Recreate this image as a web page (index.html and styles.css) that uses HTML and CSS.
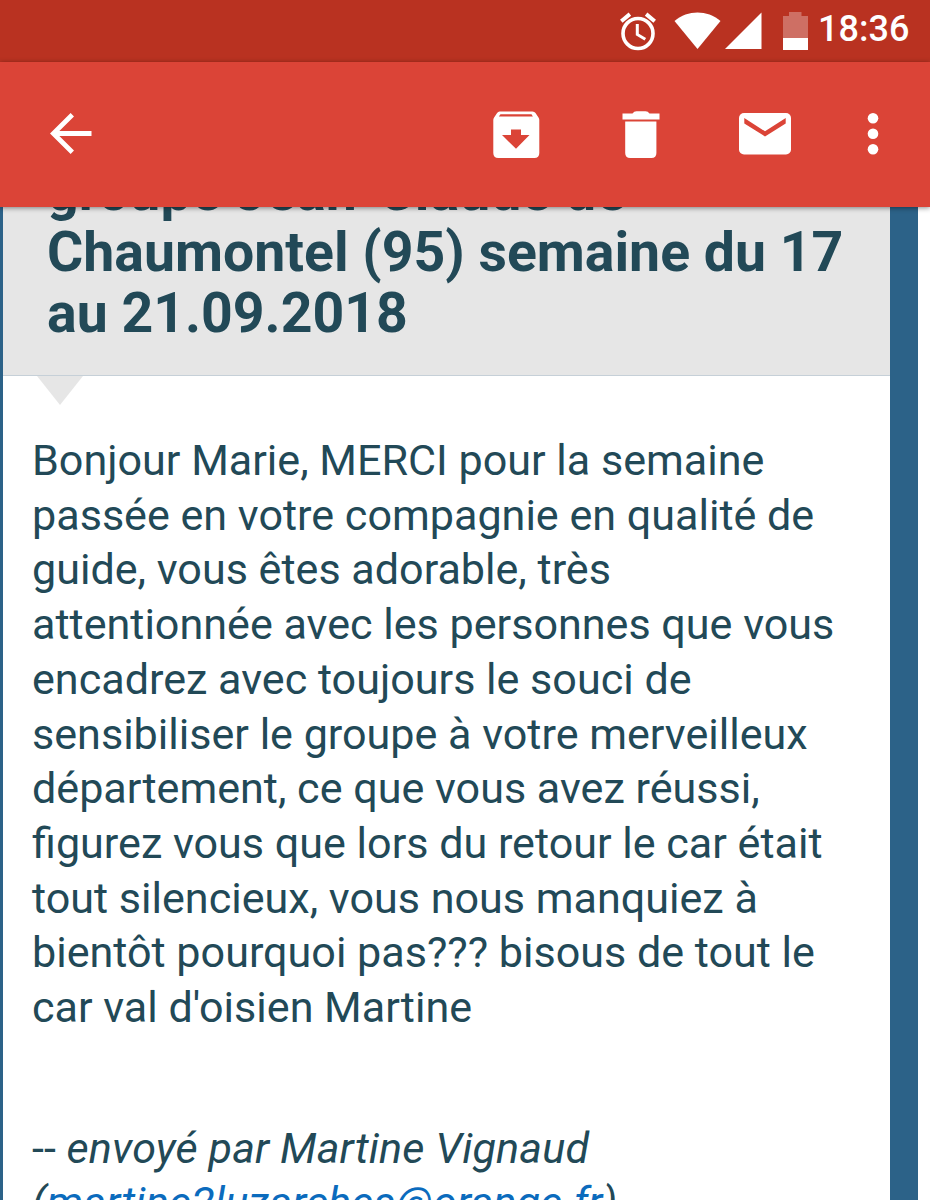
FILE: index.html
```
<!doctype html>
<html lang="fr">
<head>
    <meta charset="UTF-8">
    <meta name="viewport" content="width=device-width, initial-scale=1.0">
    <title>Message</title>
    <link rel="stylesheet" href="styles.css">
</head>
<body>
<div class="status-bar">
    <svg class="alarm" width="38" height="40" viewBox="0 0 38 40" fill="none" stroke="#fff">
        <circle cx="19" cy="21.5" r="15" stroke-width="3.6"/>
        <path d="M18.3 12v10.5l8 4.8" stroke-width="3"/>
        <path d="M2.3 9.2l8.6-7.1M35.7 9.2l-8.6-7.1" stroke-width="4"/>
    </svg>
    <svg class="wifi" width="47" height="38" viewBox="0 0 47 38" fill="#fff">
        <path d="M0.5 9C14-2.2 33-2.2 46.5 9L23.5 37z"/>
    </svg>
    <svg class="signal" width="37" height="38" viewBox="0 0 37 38" fill="#fff">
        <path d="M36.5 0.5V37H0z"/>
    </svg>
    <svg class="battery" width="25" height="38" viewBox="0 0 25 38" fill="#fff">
        <path d="M0 4h6V0h12.5v4H25v22H0z" opacity=".3"/>
        <path d="M0 26h25v12H0z"/>
    </svg>
    <span class="time">18:36</span>
</div>
<div class="toolbar">
    <svg class="back" width="42" height="42" viewBox="0 0 42 42" fill="none" stroke="#fff" stroke-width="4.8">
        <path d="M41.5 20.5H4M22.3 1.8L3.4 20.5L22.3 39.2"/>
    </svg>
    <svg class="archive" width="48" height="48" viewBox="0 0 48 48">
        <path fill="#fff" d="M7.5 0.5h33q2 0 3 1.5l3 4.5q.8 1.2 .8 2.5v33q0 5-5 5h-36q-5 0-5-5V9q0-1.300 .8-2.500l3-4.500q1-1.500 2.400-1.500z"/>
        <path fill="#db4437" d="M8.5 3.3h31l1.4 2.3H6.8zM19 18.5h10v5.5h8.5L24 37.8 10 24h9z"/>
    </svg>
    <svg class="trash" width="38" height="48" viewBox="0 0 38 48" fill="#fff">
        <path d="M0.5 2.5h10q1.5-2.3 4-2.3h9q2.5 0 4 2.3h10V8.5H0.5zM3.2 10.5h31.2V42q0 5-5 5h-21.200q-5 0-5-5z"/>
    </svg>
    <svg class="mail" width="52" height="42" viewBox="0 0 52 42">
        <rect width="52" height="41.5" rx="5" fill="#fff"/>
        <path d="M5.3 5L26 18.3L46.7 5V10.5L26 23.5L5.3 10.5z" fill="#db4437"/>
    </svg>
    <svg class="more" width="12" height="42" viewBox="0 0 12 42" fill="#fff">
        <circle cx="6" cy="5.3" r="5.3"/>
        <circle cx="6" cy="20.8" r="5.3"/>
        <circle cx="6" cy="36.3" r="5.3"/>
    </svg>
</div>
<div class="content">
    <div class="message">
        <h1 class="title">groupe Jean-Claude de<br>Chaumontel (95) semaine du 17<br>au 21.09.2018</h1>
        <div class="text">
            <p>Bonjour Marie, MERCI pour la semaine<br>
                passée en votre compagnie en qualité de<br>
                guide, vous êtes adorable, très<br>
                attentionnée avec les personnes que vous<br>
                encadrez avec toujours le souci de<br>
                sensibiliser le groupe à votre merveilleux<br>
                département, ce que vous avez réussi,<br>
                figurez vous que lors du retour le car était<br>
                tout silencieux, vous nous manquiez à<br>
                bientôt pourquoi pas??? bisous de tout le<br>
                car val d'oisien Martine</p>
            <p class="signature">-- <em>envoyé par Martine Vignaud<br>
                (<a href="#">martine2luzarches@orange.fr</a>)</em></p>
        </div>
    </div>
</div>
</body>
</html>
```
FILE: styles.css
```
body{
    margin: 0;
    height: 1200px;
    overflow: hidden;
    display: flex;
    flex-direction: column;
    font-family: Roboto, sans-serif;
    color: #224957;
    background: white;
}
svg{
    display: block;
    flex: none;
}
.status-bar{
    flex: none;
    box-sizing: border-box;
    height: 62px;
    padding: 12px 21px 0 0;
    display: flex;
    justify-content: flex-end;
    background: #b93221;
}
.wifi{
    margin-left: 17px;
}
.signal{
    margin-left: 4px;
}
.battery{
    margin-left: 21px;
}
.time{
    width: 91px;
    margin-left: 10px;
    color: white;
    font-size: 36px;
    font-weight: 500;
    line-height: 35px;
    white-space: nowrap;
}
.toolbar{
    flex: none;
    box-sizing: border-box;
    height: 145px;
    padding: 0 51px 0 50px;
    display: flex;
    align-items: center;
    background: #db4437;
    box-shadow: 0 1px 5px rgba(0,0,0,.45);
    z-index: 1;
}
.back{
    margin-bottom: 2px;
}
.archive{
    margin-left: auto;
}
.trash{
    margin-left: 82px;
}
.mail{
    margin-left: 79px;
    margin-bottom: 1px;
}
.more{
    margin-left: 76px;
    margin-bottom: 1px;
}
.content{
    flex: 1;
    min-height: 0;
    overflow: hidden;
    width: 886px;
    border-left: 3.5px solid #2c6288;
    border-right: 28px solid #2c6288;
    padding-right: 1px;
}
/* the message is scrolled under the toolbar */
.message{
    margin: -46px -1px 0 0;
}
.title{
    box-sizing: border-box;
    height: 215px;
    margin: 0;
    padding-left: 44px;
    border-bottom: 1px solid #c6d0d8;
    background: #e6e6e6;
    font-size: 55.4px;
    font-weight: 700;
    line-height: 61px;
    white-space: nowrap;
}
.title::after{
    content: "";
    display: block;
    width: 46px;
    height: 29px;
    margin: 32px 0 0 -10px;
    background: #e6e6e6;
    clip-path: polygon(0 0, 100% 0, 50% 100%);
}
.text{
    padding: 58px 0 0 29px;
    font-size: 43.1px;
    line-height: 54.7px;
    white-space: nowrap;
}
.text p{
    margin: 0;
}
.text .signature{
    margin-top: 86px;
}
em{
    letter-spacing: .15px;
}
a{
    color: #0b6bbd;
    text-decoration: none;
}
```
